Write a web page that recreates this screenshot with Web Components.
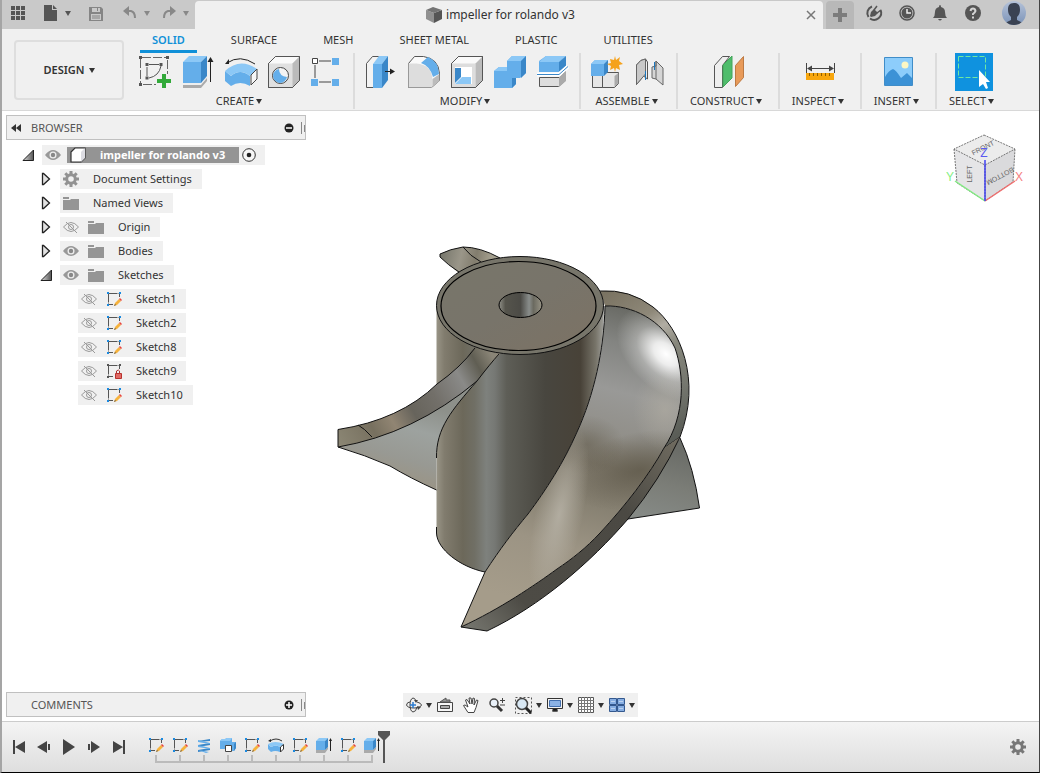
<!DOCTYPE html>
<html lang="en">
<head>
<meta charset="utf-8">
<title>impeller for rolando v3</title>
<style>
  html, body {
    height: 100%;
    margin: 0;
  }

  body {
    font: 11px/16px "Noto Sans", "Open Sans", sans-serif;
    color: #333;
    background: #fff;
    overflow: hidden;
  }
</style>
</head>
<body>
<cad-app></cad-app>

<script>
const blue = "#64aeea";
const pale = "#8cc8f6";
const deep = "#3a87c8";

const sketchBase = `
  <path d="M2.500 2.500H13.500V6M2.500 2.500V13.500H7" fill="none" stroke="#555" stroke-dasharray="9 1"/>
  <path d="M1 1h2v2H1zM13 1h2v2h-2zM1 13h2v2H1z" fill="#1b8ae0"/>`;

const icons = {
  // quick access bar
  apps: [16, 16, `<path fill="#555" d="M1 1h4v4H1zM6 1h4v4H6zM11 1h4v4h-4zM1 6h4v4H1zM6 6h4v4H6zM11 6h4v4h-4zM1 11h4v4H1zM6 11h4v4H6zM11 11h4v4h-4z"/>`],
  file: [14, 16, `<path fill="#555" d="M0 0h8v5h5v11H0z"/><path fill="#555" d="M9 0l4 4H9z"/>`],
  save: [14, 16, `<path fill="#858585" fill-rule="evenodd" d="M0 2h12l2 2v12H0zM3 3v4h8V3H9v3H8V3zM2 9v6h10V9z"/><path stroke="#858585" d="M3 11h8M3 13h8"/>`],
  undo: [14, 14, `<path fill="none" stroke="#888" stroke-width="2" d="M2 5h6q4 1 4 7"/><path fill="#888" d="M0 5l6-5v10z"/>`],
  redo: [14, 14, `<path fill="none" stroke="#888" stroke-width="2" d="M12 5H6Q2 6 2 12"/><path fill="#888" d="M14 5L8 0v10z"/>`],
  caret: [6, 5, `<path fill="currentColor" d="M0 0h6L3 5z"/>`],
  cube: [16, 16, `<path fill="#909090" d="M0 3l8 3v10l-8-4z"/><path fill="#555" d="M16 3L8 6v10l8-4z"/><path fill="#747474" d="M0 3l7-3 9 3-8 3z"/>`],
  close: [10, 10, `<path stroke="#777" stroke-width="1.500" d="M1 1l8 8M9 1L1 9"/>`],
  plus: [14, 14, `<path fill="#7c7c7c" d="M5 0h4v5h5v4H9v5H5V9H0V5h5z"/>`],
  extensions: [16, 16, `<path d="M6 1.500A7 7 0 0 0 2.500 12M14.500 5A7 7 0 0 1 4 13.500" fill="none" stroke="#555" stroke-width="2"/><path fill="#555" d="M4 11l1-4 3-3 4 4-3 3-4 1z"/><path d="M8 5l3-4M11 8l4-3" stroke="#555" stroke-width="1.500"/>`],
  clock: [16, 16, `<circle cx="8" cy="8" r="7" fill="none" stroke="#555" stroke-width="1.500"/><circle cx="8" cy="8" r="5.500" fill="#555"/><path d="M8 4v4h4" stroke="#eee" stroke-width="1.500" fill="none"/>`],
  bell: [16, 16, `<path fill="#555" d="M8 0q1 0 1 2 4 1 4 5 0 4 2 6H1q2-2 2-6 0-4 4-5 0-2 1-2M6 14h4q-2 3-4 0"/>`],
  help: [16, 16, `<circle cx="8" cy="8" r="8" fill="#555"/><path d="M5.500 6Q6 3.500 8 3.500T10.500 6Q10 7.500 8 9v1M8 11.500v2" stroke="#d4d4d4" stroke-width="2" fill="none"/>`],
  avatar: [24, 24, `<defs><clipPath id="a"><circle cx="12" cy="12" r="12"/></clipPath><linearGradient id="g" x2="0" y2="1"><stop stop-color="#b5c2d8"/><stop offset="1" stop-color="#7b93b8"/></linearGradient></defs><g clip-path="url(#a)"><path fill="url(#g)" d="M0 0h24v24H0z"/><path fill="#3a4252" d="M12 2c5 0 6 3 6 7 0 3-1 5-3 7v3l6 3v2H3v-2l6-3v-3c-2-2-3-4-3-7 0-4 1-7 6-7"/></g>`],

  // create
  sketch: [32, 32, `
    <path d="M3 1.500h24M1.500 3v24M28.500 4v14M4 28.500h13" fill="none" stroke="#666" stroke-dasharray="9 2"/>
    <path d="M10 8.500h10M8 11v9M22 10Q20 20 10 22" fill="none" stroke="#555"/>
    <path d="M0 0h3v3H0zM27 0h3v3h-3zM0 27h3v3H0zM6.500 7h3v3h-3zM20.500 7h3v3h-3zM6.500 20.500h3v3h-3z" fill="#555"/>
    <path d="M23 18h4v5h5v4h-5v5h-4v-5h-5v-4h5z" fill="#32a93a"/>`],
  extrude: [32, 32, `
    <path d="M1 28h18l6-7v4l-6 7H1z" fill="#aaa"/><path d="M1 27h18l6-7v2l-6 7H1z" fill="#eee"/>
    <path d="M1 6h18v21H1z" fill="${blue}"/><path d="M1 6l6-6h18l-6 6z" fill="${pale}"/><path d="M19 6l6-6v20l-6 7z" fill="${deep}"/>
    <path d="M28.500 26V4" stroke="#222"/><path d="M28.500 1l3 5h-6z" fill="#222"/>`],
  revolve: [32, 32, `
    <path d="M2 7Q15-2 30 8" fill="none" stroke="#222"/><path d="M0 8l4-5v5z" fill="#222"/>
    <path d="M0 15l6 5q9-8 19 0v10q-10-6-19 0l-6-5z" fill="${blue}"/><path d="M0 15Q15 1 32 13l-7 7q-10-8-19 0z" fill="${pale}"/>
    <path d="M26 19l6-6v10l-6 6z" fill="#f6f6f6" stroke="#444"/>`],
  hole: [32, 32, `
    <path d="M.500 7.500l7-7h24v24l-7 7H.500z" fill="#e0e0e0" stroke="#555"/><path d="M.500 7.500l7-7h24l-7 7z" fill="#fafafa"/>
    <path d="M24.500 7.500l7-7v24l-7 7z" fill="#bbb"/><path d="M.500 7.500l7-7h24v24l-7 7H.500z" fill="none" stroke="#555"/>
    <circle cx="12.500" cy="19.500" r="8" fill="#f4f4f4" stroke="#444"/><path d="M11 13Q11 20 19 21a7 7 0 1 1-8-8" fill="${blue}"/>`],
  pattern: [32, 32, `
    <path d="M8 5h12M8 26h12M4 9v13" stroke="#444"/><path d="M1.500 2.500h5v5h-5z" fill="#fff" stroke="#444"/>
    <path d="M21 2h7v7h-7zM0 23h7v7H0zM21 23h7v7h-7z" fill="${blue}"/>`],

  // modify
  press: [32, 32, `
    <path d="M1.500 31.500v-24l6-7h6v31z" fill="#f3f3f3" stroke="#555"/><path d="M8 8h9v24H8z" fill="${blue}"/>
    <path d="M8 8l6-8h9l-6 8z" fill="${pale}"/><path d="M17 8l6-8v24l-6 8z" fill="${deep}"/>
    <path d="M20 15.500h7" stroke="#222"/><path d="M30 15.500l-5-3v6z" fill="#222"/>`],
  fillet: [32, 32, `
    <path d="M.500 7.500l6-7h9q15 2 16 17v7l-8 7H.500z" fill="#fafafa" stroke="#555"/>
    <path d="M.500 7.500h8q15 1 16 16v8H.500z" fill="#ddd"/><path d="M13 7l7-6q11 5 11 17l-6 3Q22 10 13 7" fill="${blue}"/>
    <path d="M24.500 23l7-5v7l-7 6z" fill="#bbb"/>`],
  shell: [32, 32, `
    <path d="M.500 7.500l7-7h24v24l-7 7H.500z" fill="#fafafa" stroke="#555"/><path d="M.500 7.500h24v24H.500z" fill="#ddd"/>
    <path d="M24.500 7.500l7-7v24l-7 7z" fill="#bbb"/><path d="M.500 7.500l7-7h24v24l-7 7H.500z" fill="none" stroke="#555"/>
    <path d="M4 11h17v17H4z" fill="#fff"/><path d="M4 12h6v9l-6 6z" fill="${deep}"/><path d="M4 28l7-7h9v7z" fill="${pale}"/>`],
  combine: [32, 32, `
    <path d="M0 15l5-4h8V5l5-5h14v17l-6 5h-4v6l-4 4H0z" fill="${blue}"/><path d="M0 15l5-4h8v4zM13 5l5-5h14l-5 5z" fill="${pale}"/>
    <path d="M27 5l5-5v17l-5 5zM18 32V22h4v6z" fill="${deep}"/>`],
  split: [32, 32, `
    <path d="M2 5l7-5h20l-7 6v10H2z" fill="${blue}"/><path d="M2 6l7-6h20l-7 6z" fill="${pale}"/><path d="M22 6l7-6v10l-7 6z" fill="${deep}"/>
    <path d="M2.500 21.500h20l6-6v9l-7 6h-19z" fill="#ddd" stroke="#555"/><path d="M22 21l7-6v10l-7 6z" fill="#aaa"/>
    <path d="M0 18.500h22l9-8" stroke="#fff" stroke-width="4" fill="none"/><path d="M0 18.500h22l9-8" stroke="${deep}" fill="none"/>`],

  // assemble
  component: [32, 32, `
    <path d="M1.500 19.500h10v12h-10zM11.500 19.500l4-3h12v11l-4 4h-12z" fill="#e6e6e6" stroke="#555"/>
    <path d="M0 8l4-4h13l-4 4v12H0z" fill="${blue}"/><path d="M0 8l4-4h13l-4 4z" fill="${pale}"/><path d="M13 8l4-4v12l-4 4z" fill="${deep}"/>
    <path d="M23.500 20v11l4-4V17z" fill="#aaa"/>
    <path d="M24 0l1 4 4-3-1 4 4 3-4 1 1 5-4-2-1 4-1-4-4 2 1-4-4-2 4-1-1-4 4 1z" fill="#f5a21c"/>`],
  joint: [32, 32, `
    <path d="M2.500 28.500V9q4-6 9-6l2 3v17l-4-3z" fill="#eee" stroke="#555"/><path d="M2.500 28.500V9q4-6 9-6v15z" fill="#c8c8c8" stroke="#666"/>
    <path d="M18 11l4-1V5l7 7v17l-7-6-4-1z" fill="#d5d5d5" stroke="#666"/><path d="M22 5v18" stroke="#666"/>
    <path d="M11.500 15v9M20.500 6v8" stroke="#1b77bd"/>`],

  // construct, inspect, insert, select
  plane: [32, 32, `
    <path d="M2.500 31.500v-22l8-9h7l-7 9v22z" fill="#eee" stroke="#555"/><path d="M11 9l9-9v22l-9 9z" fill="#4fbd6c" stroke="#44a45b"/>
    <path d="M23.500 9.500l8-9v21l-8 9z" fill="#e89a59" stroke="#bd7a44"/>`],
  measure: [32, 32, `
    <path d="M2.500 7v10M30.500 7v10M5 12.500h23" stroke="#444"/><path d="M3 12.500l5-3v6zM30 12.500l-5-3v6z" fill="#444"/>
    <path d="M2 17h28v7H2z" fill="#f8a70f"/><path d="M5.500 17v3M9.500 17v3M13.500 17v3M17.500 17v3M21.500 17v3M25.500 17v3" stroke="#8d5d00"/>`],
  image: [32, 32, `
    <path d="M2.500 1.500h28v28h-28z" fill="#8dcdfb" stroke="#408dc8"/><circle cx="23" cy="9" r="3.500" fill="#fdf7c4"/>
    <path d="M3 21Q7 14 11 13q3 1 8 9l6-5 5 5v7H3z" fill="#3c92d6"/>`],
  select: [38, 38, `
    <path d="M0 0h38v38H0z" fill="#0f92df"/><path d="M3.500 3.500h27v21h-27z" fill="none" stroke="#6fe8a0" stroke-dasharray="5 2"/>
    <path d="M24 17v17l4-3 3 5 2-1-2-6h4z" fill="#fff"/>`],

  // browser tree
  rewind: [10, 8, `<path fill="#333" d="M5 0v8L0 4zM10 0v8L5 4z"/>`],
  minus: [10, 10, `<circle cx="5" cy="5" r="4.500" fill="#222"/><path d="M2 5h6" stroke="#fff" stroke-width="1.500"/>`],
  add: [10, 10, `<circle cx="5" cy="5" r="4.500" fill="#222"/><path d="M2 5h6M5 2v6" stroke="#fff" stroke-width="1.500"/>`],
  grip: [4, 12, `<path d="M.500 0v12M3.500 3v7" stroke="#888"/>`],
  open: [12, 12, `<defs><linearGradient id="g"><stop stop-color="#ddd"/><stop offset="1" stop-color="#555"/></linearGradient></defs><path d="M1 11.500L11.500 1v10.500z" fill="url(#g)" stroke="#222"/>`],
  shut: [12, 14, `<path d="M2.500 1.500h1l6 5.500-6 5.500h-1z" fill="#e2e2e2" stroke="#222" stroke-width="1.300"/>`],
  eye: [16, 16, `<path fill="#989898" d="M0 8q8-10 16 0-8 10-16 0"/><circle cx="8" cy="8" r="3.500" fill="#eee"/><circle cx="8" cy="8" r="2.200" fill="#888"/>`],
  hidden: [16, 16, `<path fill="none" stroke="#999" d="M.500 8Q8-1 15.500 8 8 17 .500 8M3 3l11 11"/><circle cx="8" cy="8" r="2.500" fill="none" stroke="#999"/>`],
  gear: [16, 16, `<circle cx="8" cy="8" r="4.300" fill="none" stroke="currentColor" stroke-width="3"/><path stroke="currentColor" stroke-width="3" d="M8 0v3M8 13v3M0 8h3M13 8h3M2.300 2.300l2.200 2.200M11.500 11.500l2.200 2.200M2.300 13.700l2.200-2.200M11.500 4.500l2.200-2.200"/>`],
  folder: [16, 16, `<path fill="#959595" d="M0 5h7l1-1h8v11H0z"/><path fill="#959595" d="M0 2h6v2H0z"/>`],
  body: [16, 16, `<path d="M1 5l4-4h10v10l-4 4H1z" fill="#fff" stroke="#333" stroke-width="1.200"/><path d="M11 5l4-4v10l-4 4z" fill="#dcdce2"/>`],
  radio: [16, 16, `<circle cx="8" cy="8" r="6.300" fill="#f6f6f6" stroke="#333"/><circle cx="8" cy="8" r="2.300" fill="#222"/>`],
  pencil: [16, 16, `${sketchBase}<path d="M8 15l1-3 4-4 2 2-4 4z" fill="#f6b23c"/><path d="M8 15l1-2 1 1z" fill="#555"/><path d="M13 8l1-1 2 2-1 1z" fill="#e8413c"/>`],
  locked: [16, 16, `<path d="M2.500 2.500H13.500V6M2.500 2.500V13.500H7" fill="none" stroke="#555" stroke-dasharray="9 1"/><path d="M1 1h2v2H1zM13 1h2v2h-2zM1 13h2v2H1z" fill="#555"/><path d="M10.500 10V8q2-2 3 0v2" fill="none" stroke="#a33"/><path d="M9.500 10.500h6v5h-6z" fill="#e06a66" stroke="#b8322e"/>`],

  // timeline
  coil: [16, 16, `<path d="M2 4l12-2v2L2 5zM2 8l12-2v2L2 10zM2 13l12-2v2L2 15z" fill="${deep}"/><path d="M2 3l12 3v1L2 5zM2 8l12 3v1L2 10zM2 13l11 2-3 1z" fill="${blue}"/>`],
  join: [16, 16, `<path d="M0 4l2-2h3l2-1h5v4h4v6l-2 3H5v-2H0z" fill="${blue}"/><path d="M0 4l2-2h3l2-1h5l-2 3z" fill="${pale}"/><path d="M14 7l2-2v6l-2 3z" fill="${deep}"/><path d="M5.500 8.500h6v6h-6z" fill="#fff" stroke="#444"/>`],
  sweep: [16, 16, `<path d="M2 4q6-4 12 0" fill="none" stroke="#333"/><path d="M0 4l3-2v3z" fill="#222"/><path d="M0 7l3 3q5-3 9 0v5q-5-2-9 0l-3-3z" fill="${blue}"/><path d="M0 7q7-4 16 0l-4 3q-4-3-9 0z" fill="${pale}"/><path d="M12.500 10l3-2.500v4.500l-3 3z" fill="#fff" stroke="#333"/>`],
  pull: [16, 16, `<path d="M0 13h9l3-3v2l-3 4H0z" fill="#aaa"/><path d="M0 4h9v9H0z" fill="${blue}"/><path d="M0 4l3-3h9L9 4z" fill="${pale}"/><path d="M9 4l3-3v9l-3 3z" fill="${deep}"/><path d="M14.500 14V3" stroke="#222"/><path d="M14.500 1l1.500 3h-3z" fill="#222"/>`],
  first: [14, 14, `<path fill="#444" d="M1 0h2v14H1zM13 1v12L3 7z"/>`],
  back: [14, 14, `<path fill="#444" d="M10 1v12L0 7zM11 4h2v6h-2z"/>`],
  play: [14, 16, `<path fill="#444" d="M1 0l12 8-12 8z"/>`],
  next: [14, 14, `<path fill="#444" d="M4 1v12l9-6zM1 4h2v6H1z"/>`],
  last: [14, 14, `<path fill="#444" d="M11 0h2v14h-2zM1 1v12l10-6z"/>`],
  marker: [12, 32, `<path fill="#555" d="M0 0h12v4L7 9v23H5V9L0 4z"/>`],

  // navigation bar
  orbit: [16, 16, `<path d="M11 5q4 1 4.500 3-1 3-7.500 3T.500 8Q1 5 4 5" fill="none" stroke="#444"/><path d="M11 10q-1 5-4 5-3-1-3-7t3-7q2 0 3 3" fill="none" stroke="#444"/><path d="M7 5v6M4 8h6" stroke="#2a7bd0" stroke-width="1.500"/><path d="M8 3h4l-2 3zM11 9l4 1-3 3z" fill="#444"/>`],
  look: [16, 16, `<path d="M.500 5.500h15v9H.500z" fill="#f6f6f6" stroke="#444"/><path d="M3 5l6-4v2h4v2z" fill="#999" stroke="#555"/><path d="M3.500 8.500h9v3h-9z" fill="#aaa" stroke="#444"/>`],
  pan: [16, 16, `<path d="M4 14L.500 8.500 2 8l3 2-2.500-7 1.500-.500L7 7 6 1h2l1 6 1-6 1.500.500L11 8l2.500-5 1.500.500-2 7-2 5H5z" fill="#fff" stroke="#444"/>`],
  zoom: [16, 16, `<circle cx="5" cy="6" r="4" fill="#eaf2fa" stroke="#444" stroke-width="1.500"/><path d="M8 9l5 5" stroke="#333" stroke-width="3"/><path d="M11 3.500h5M13.500 1v5M11 8h5" stroke="#444"/>`],
  fit: [17, 17, `<path d="M.500.500h16v16H.500z" fill="none" stroke="#555" stroke-dasharray="2 2"/><circle cx="7" cy="7" r="5.500" fill="#d9e8f4" stroke="#444" stroke-width="1.500"/><path d="M11 11l5 5" stroke="#222" stroke-width="3"/>`],
  display: [16, 16, `<path d="M.500 1.500h15v10H.500z" fill="#f2f2f2" stroke="#333"/><path d="M2.500 3.500h11v6h-11z" fill="#8bb2e5" stroke="#426fae"/><path d="M5 14h6M6 12h4v2H6z" stroke="#333"/>`],
  grid: [16, 16, `<path d="M.500.500h15v15H.500z" fill="#fff" stroke="#555"/><path d="M3.500 0v16M6.500 0v16M9.500 0v16M12.500 0v16M0 3.500h16M0 6.500h16M0 9.500h16M0 12.500h16" stroke="#777"/>`],
  views: [16, 14, `<path d="M.500.500h7v6h-7zM8.500.500h7v6h-7zM.500 7.500h7v6h-7zM8.500 7.500h7v6h-7z" fill="#87aee2" stroke="#34598f"/><path d="M2 3.500h4M10 3.500h4M2 10.500h4M10 10.500h4" stroke="#bcd3f0"/>`]
};

class CadIcon extends HTMLElement {
  connectedCallback() {
    const [w, h, art] = icons[this.getAttribute("name")];
    this.attachShadow({ mode: "open" }).innerHTML = `
      <style>
        :host { display: inline-flex; flex: none; }
        svg { display: block; overflow: visible; }
      </style>
      <svg width="${w}" height="${h}" viewBox="0 0 ${w} ${h}" aria-hidden="true">${art}</svg>`;
  }
}

const icon = name => `<cad-icon name="${name}"></cad-icon>`;

const buttonReset = `
  button {
    font: inherit;
    color: inherit;
    background: none;
    border: 0;
    padding: 0;
    margin: 0;
    display: inline-flex;
    align-items: center;
    justify-content: center;
  }
`;

function define(name, html) {
  const template = document.createElement("template");
  template.innerHTML = html;
  customElements.define(name, class extends HTMLElement {
    constructor() {
      super();
      this.attachShadow({ mode: "open" }).appendChild(template.content.cloneNode(true));
    }
  });
}

customElements.define("cad-icon", CadIcon);

define("app-bar", `
  <style>
    :host {
      display: flex;
      height: 28px;
      padding-top: 1px;
      background: #c9c9c9;
    }
    ${buttonReset}
    .quick {
      display: flex;
      align-items: center;
      width: 185px;
      padding-left: 8px;
      padding-bottom: 4px;
      color: #555;
    }
    .quick button { gap: 7px; }
    .quick .file { margin-left: 18px; }
    .quick .save { margin-left: 18px; }
    .quick .undo { margin-left: 20px; color: #888; }
    .quick .redo { margin-left: 12px; color: #888; }
    .tab {
      flex: 1;
      display: flex;
      align-items: center;
      padding-right: 7px;
      background: #f0f0f0;
      border-radius: 4px 4px 0 0;
    }
    .tab span {
      flex: 1;
      display: flex;
      justify-content: center;
      align-items: center;
      gap: 4px;
      font-size: 12px;
    }
    .new {
      width: 28px;
      margin-left: 3px;
      background: #b8b8b8;
      border-radius: 4px 4px 0 0;
    }
    .tools {
      display: flex;
      align-items: center;
      gap: 17px;
      padding: 0 13px 4px 12px;
    }
    .tools .user { margin-left: 4px; }
  </style>
  <div class="quick">
    <button aria-label="Data panel">${icon("apps")}</button>
    <button class="file" aria-label="File">${icon("file")}${icon("caret")}</button>
    <button class="save" aria-label="Save">${icon("save")}</button>
    <button class="undo" aria-label="Undo">${icon("undo")}${icon("caret")}</button>
    <button class="redo" aria-label="Redo">${icon("redo")}${icon("caret")}</button>
  </div>
  <div class="tab">
    <span>${icon("cube")}<slot></slot></span>
    <button aria-label="Close">${icon("close")}</button>
  </div>
  <button class="new" aria-label="New design">${icon("plus")}</button>
  <div class="tools">
    <button aria-label="Extensions">${icon("extensions")}</button>
    <button aria-label="Job status">${icon("clock")}</button>
    <button aria-label="Notifications">${icon("bell")}</button>
    <button aria-label="Help">${icon("help")}</button>
    <button class="user" aria-label="Account">${icon("avatar")}</button>
  </div>
`);

// one labelled set of tools; the tool icons are slotted in
define("tool-group", `
  <style>
    :host {
      display: flex;
      flex-direction: column;
      align-items: center;
      padding: 0 10px;
      border-right: 2px solid #dcdcdc;
    }
    :host(:last-child) { border: 0; }
    ${buttonReset}
    .row {
      display: flex;
      align-items: center;
      gap: 11px;
      height: 38px;
    }
    .label {
      gap: 2px;
      padding: 2px 6px 0 2px;
    }
  </style>
  <div class="row"><slot></slot></div>
  <button class="label"><slot name="label"></slot>${icon("caret")}</button>
`);

const group = (label, names) => `
  <tool-group><span slot="label">${label}</span>${names.map(n => `<button aria-label="${n}">${icon(n)}</button>`).join("")}</tool-group>`;

define("tool-ribbon", `
  <style>
    :host {
      display: flex;
      background: #f0f0f0;
      border-bottom: 1px solid #d8d8d8;
      padding-bottom: 1px;
    }
    ${buttonReset}
    .design {
      flex: none;
      width: 110px;
      height: 60px;
      margin: 11px 5px 0 12px;
      border: 2px solid #dedede;
      border-radius: 4px;
      font-weight: 600;
      gap: 4px;
    }
    nav {
      display: flex;
      gap: 22px;
      padding-left: 11px;
    }
    nav a {
      padding: 3px 12px 2px;
      border-bottom: 3px solid transparent;
      color: inherit;
      text-decoration: none;
    }
    nav a.on {
      color: #1090d8;
      font-weight: 600;
      border-color: #1090d8;
    }
    .groups { display: flex; }
  </style>
  <button class="design">DESIGN ${icon("caret")}</button>
  <div>
    <nav>
      <a class="on" href="#solid">SOLID</a>
      <a href="#surface">SURFACE</a>
      <a href="#mesh">MESH</a>
      <a href="#sheet">SHEET METAL</a>
      <a href="#plastic">PLASTIC</a>
      <a href="#utilities">UTILITIES</a>
    </nav>
    <div class="groups">
      ${group("CREATE", ["sketch", "extrude", "revolve", "hole", "pattern"])}
      ${group("MODIFY", ["press", "fillet", "shell", "combine", "split"])}
      ${group("ASSEMBLE", ["component", "joint"])}
      ${group("CONSTRUCT", ["plane"])}
      ${group("INSPECT", ["measure"])}
      ${group("INSERT", ["image"])}
      ${group("SELECT", ["select"])}
    </div>
  </div>
`);

define("dock-panel", `
  <style>
    :host { display: block; }
    ${buttonReset}
    header {
      display: flex;
      align-items: center;
      height: 23px;
      padding-left: 4px;
      background: #f0f0f0;
      border: 1px solid #c0c0c0;
      color: #555;
    }
    .lead { width: 10px; margin-right: 10px; }
    .title { flex: 1; }
    .grip { margin-left: 7px; }
  </style>
  <header>
    <span class="lead"><slot name="lead"></slot></span>
    <span class="title"><slot name="title"></slot></span>
    <slot name="action"></slot>
    <cad-icon class="grip" name="grip"></cad-icon>
  </header>
  <slot></slot>
`);

class TreeRow extends HTMLElement {
  connectedCallback() {
    const level = Number(this.getAttribute("level"));
    const arrow = this.getAttribute("arrow");
    const eye = this.getAttribute("eye");
    const root = this.hasAttribute("root");
    this.attachShadow({ mode: "open" }).innerHTML = `
      <style>
        :host {
          display: flex;
          align-items: center;
          height: 24px;
          padding-left: ${[16, 34, 52][level]}px;
        }
        ${buttonReset}
        .arrow { display: flex; width: 12px; margin-right: 8px; }
        .item {
          display: flex;
          align-items: center;
          height: 20px;
          padding: 0 10px 0 3px;
          background: #f0f0f0;
          color: #333;
        }
        .eye { margin-right: 9px; }
        .type { margin-right: 14px; color: #929292; }
        .name { display: flex; align-items: center; }
        .root { padding-right: 8px; }
        .root .name {
          height: 16px;
          padding: 0 14px 0 3px;
          margin-right: 2px;
          background: #949494;
          color: #fff;
          font-weight: bold;
        }
        .root .eye { margin-right: 6px; }
      </style>
      <span class="arrow">${arrow ? `<button aria-label="Toggle">${icon(arrow)}</button>` : ""}</span>
      <div class="item ${root ? "root" : ""}">
        ${eye ? `<button class="eye" aria-label="Visibility">${icon(eye)}</button>` : ""}
        <span class="name"><cad-icon class="type" name="${this.getAttribute("icon")}"></cad-icon><slot></slot></span>
        ${root ? icon("radio") : ""}
      </div>`;
  }
}
customElements.define("tree-row", TreeRow);

define("impeller-model", `
  <style>
    :host { display: block; }
    svg { display: block; width: 372px; height: 392px; }
    .edge { fill: none; stroke: #111; }
  </style>
  <svg viewBox="334 242 372 392" role="img" aria-label="Impeller">
    <defs>
      <linearGradient id="hub" gradientUnits="userSpaceOnUse" x1="436" x2="604" y1="0" y2="0">
        <stop stop-color="#9a9688"/><stop offset=".05" stop-color="#817c6e"/><stop offset=".16" stop-color="#6c685a"/>
        <stop offset=".23" stop-color="#706f65"/><stop offset=".3" stop-color="#7e817d"/><stop offset=".35" stop-color="#767874"/>
        <stop offset=".42" stop-color="#5e5e57"/><stop offset=".65" stop-color="#48463f"/><stop offset=".86" stop-color="#484238"/>
        <stop offset=".95" stop-color="#777469"/><stop offset="1" stop-color="#a0a09b"/>
      </linearGradient>
      <linearGradient id="cap" x2="1" y2="1"><stop stop-color="#78766a"/><stop offset=".5" stop-color="#78746a"/><stop offset="1" stop-color="#7c7264"/></linearGradient>
      <linearGradient id="bore"><stop stop-color="#8f8f87"/><stop offset=".15" stop-color="#55544c"/><stop offset=".5" stop-color="#4c4b46"/><stop offset=".7" stop-color="#898d8b"/><stop offset=".8" stop-color="#6b6a60"/><stop offset="1" stop-color="#989486"/></linearGradient>
      <linearGradient id="blade" gradientUnits="userSpaceOnUse" x1="640" y1="306" x2="560" y2="610">
        <stop stop-color="#656660"/><stop offset=".13" stop-color="#838481"/><stop offset=".28" stop-color="#999997"/>
        <stop offset=".42" stop-color="#918f89"/><stop offset=".52" stop-color="#7f796c"/><stop offset=".65" stop-color="#878172"/>
        <stop offset=".8" stop-color="#9c9484"/><stop offset="1" stop-color="#a59c8a"/>
      </linearGradient>
      <radialGradient id="shine"><stop stop-color="#fff"/><stop offset=".25" stop-color="#fff" stop-opacity=".85"/><stop offset=".6" stop-color="#fff" stop-opacity=".3"/><stop offset="1" stop-color="#fff" stop-opacity="0"/></radialGradient>
      <radialGradient id="shade"><stop stop-color="#5f594a" stop-opacity=".8"/><stop offset="1" stop-color="#5f594a" stop-opacity="0"/></radialGradient>
      <radialGradient id="glow"><stop stop-color="#b5b0a4" stop-opacity=".9"/><stop offset="1" stop-color="#b5b0a4" stop-opacity="0"/></radialGradient>
      <linearGradient id="rim" gradientUnits="userSpaceOnUse" x1="603" y1="295" x2="685" y2="430">
        <stop stop-color="#7a7362"/><stop offset=".25" stop-color="#8e8879"/><stop offset=".36" stop-color="#b1ada3"/><stop offset=".5" stop-color="#87877c"/><stop offset=".75" stop-color="#75776f"/><stop offset="1" stop-color="#5a5d57"/>
      </linearGradient>
      <linearGradient id="skirt" gradientUnits="userSpaceOnUse" x1="675" y1="445" x2="475" y2="630">
        <stop stop-color="#6d695e"/><stop offset=".3" stop-color="#4b4943"/><stop offset=".8" stop-color="#4d4b45"/><stop offset="1" stop-color="#72726b"/>
      </linearGradient>
      <linearGradient id="tail" gradientUnits="userSpaceOnUse" x1="675" y1="450" x2="655" y2="518"><stop stop-color="#6b6d68"/><stop offset=".5" stop-color="#7b7d77"/><stop offset="1" stop-color="#858985"/></linearGradient>
      <linearGradient id="band" gradientUnits="userSpaceOnUse" x1="338" y1="438" x2="490" y2="352">
        <stop stop-color="#8a8573"/><stop offset=".2" stop-color="#77705f"/><stop offset=".32" stop-color="#918573"/><stop offset=".45" stop-color="#67645c"/><stop offset=".6" stop-color="#726f69"/><stop offset=".78" stop-color="#8a8a88"/><stop offset=".9" stop-color="#605e53"/><stop offset="1" stop-color="#8a8577"/>
      </linearGradient>
      <linearGradient id="under" gradientUnits="userSpaceOnUse" x1="400" y1="490" x2="425" y2="405"><stop stop-color="#9b9280"/><stop offset=".35" stop-color="#989993"/><stop offset=".7" stop-color="#9da29f"/><stop offset="1" stop-color="#8d908a"/></linearGradient>
      <linearGradient id="fin" gradientUnits="userSpaceOnUse" x1="442" y1="250" x2="490" y2="262"><stop stop-color="#77776c"/><stop offset=".4" stop-color="#9a9689"/><stop offset=".7" stop-color="#827d6e"/><stop offset="1" stop-color="#a49f8e"/></linearGradient>
      <clipPath id="face"><path d="M605 306C632 305 662 320 675 348C684 374 686 415 664 448C650 474 625 506 600 533C586 548 572 559 557 569C535 585 500 609 461 627L485 572C500 549 513 532 528 514C546 490 564 462 577 432C594 395 604 350 605 306"/></clipPath>
    </defs>

    <path d="M440 254Q450 249 463 247Q480 247 502 259L460 274Q450 266 440 257z" fill="url(#fin)"/>
    <path class="edge" d="M459 272Q448 265 440 257V254Q450 249 463 247Q480 247 500 258M463 247Q470 256 481 262"/>

    <path d="M436.500 305V533C437 549 460 567 485 572C500 549 513 532 528 514C546 490 564 462 577 432C594 395 604 350 604 305z" fill="url(#hub)"/>
    <path class="edge" d="M436.500 527V533C437 549 460 567 485 572"/>

    <path d="M680 438Q694 468 699.500 508L628 519z" fill="url(#tail)"/>
    <path class="edge" d="M680 438Q694 468 699.500 508L628 519"/>

    <path d="M600 291Q630 289 653 307C680 328 702 380 680 437L664 448C686 415 684 374 675 348C662 320 632 305 605 306z" fill="url(#rim)"/>
    <path class="edge" d="M600 291Q630 289 653 307C680 328 702 380 680 437L664 448"/>

    <path d="M680 437Q660 480 628 519C590 563 540 606 487 631L461 627C500 609 535 585 557 569C572 559 586 548 600 533C625 506 650 474 664 448z" fill="url(#skirt)"/>
    <path class="edge" d="M680 437Q660 480 628 519C590 563 540 606 487 631L461 627"/>

    <g clip-path="url(#face)">
      <path d="M455 300h240v335H455z" fill="url(#blade)"/>
      <ellipse cx="640" cy="470" rx="75" ry="38" fill="url(#shade)" transform="rotate(-12 640 470)"/>
      <ellipse cx="586" cy="445" rx="38" ry="30" fill="url(#shade)" opacity=".6"/>
      <ellipse cx="559" cy="515" rx="24" ry="90" fill="url(#glow)" transform="rotate(12 559 515)"/>
      <ellipse cx="666" cy="354" rx="58" ry="36" fill="url(#shine)" transform="rotate(42 666 354)"/>
      <ellipse cx="665" cy="410" rx="32" ry="40" fill="url(#glow)" opacity=".6"/>
    </g>
    <path class="edge" d="M605 306C632 305 662 320 675 348C684 374 686 415 664 448C650 474 625 506 600 533C586 548 572 559 557 569C535 585 500 609 461 627L485 572C500 549 513 532 528 514C546 490 564 462 577 432C594 395 604 350 605 306"/>

    <path d="M338 447Q405 434 477 381C452 410 436 428 436.500 458V490Q410 478 390 466Q365 455 338 447" fill="url(#under)"/>
    <path class="edge" d="M436.500 490Q410 478 390 466Q365 455 338 447M477 381C452 410 436 428 436.500 458"/>
    <path d="M338 429.500Q400 420 437 384Q460 368 475 346L502 352Q492 362 477 381Q414 434 338 447z" fill="url(#band)"/>
    <path class="edge" d="M338 447V429.500Q400 420 437 384Q460 368 475 348M499 354Q490 364 477 381Q414 434 338 447M358 425Q364 428 372 437"/>

    <ellipse cx="520" cy="305.500" rx="83.500" ry="49" fill="#77756a" stroke="#111"/>
    <ellipse cx="518.500" cy="306" rx="77.500" ry="44.500" fill="url(#cap)" stroke="#000" stroke-width="1.200"/>
    <ellipse cx="520.500" cy="305" rx="21.500" ry="12.500" fill="url(#bore)" stroke="#000"/>
  </svg>
`);

define("view-cube", `
  <style>
    :host { display: block; }
    svg { display: block; width: 80px; height: 72px; }
    text { font: 7px "Liberation Sans", sans-serif; fill: #666; text-anchor: middle; }
    .axis { font-size: 12px; }
    .y { fill: #84f084; }
    .z { fill: #5a5af0; }
    .x { fill: #f58080; }
  </style>
  <svg viewBox="944 132 80 72" role="img" aria-label="View cube">
    <path d="M984 135l31 14-30 16-31-16z" fill="#ececec"/>
    <path d="M954 149l31 16v36l-28-18z" fill="#e5e5e7"/>
    <path d="M1015 149l-30 16v36l28-19z" fill="#dadadc"/>
    <path d="M984 135l31 14-30 16-31-16zM954 149l3 34 28 18 28-19 2-33M985 165v36" fill="none" stroke="#555" stroke-width=".8" stroke-dasharray="2 1"/>
    <text transform="translate(984 150) rotate(-27)">FRONT</text>
    <text transform="translate(972 174) rotate(-90)">LEFT</text>
    <text transform="translate(999 174) rotate(152)">BOTTOM</text>
    <path d="M985 201l-30-20" stroke="#84ec84" stroke-width="1.500"/>
    <path d="M985 201l30-20" stroke="#f07070" stroke-width="1.500"/>
    <path d="M985 201v-41" stroke="#4040f0" stroke-width="1.500"/>
    <text class="axis y" x="950" y="181">Y</text>
    <text class="axis z" x="984" y="157">Z</text>
    <text class="axis x" x="1019" y="181">X</text>
  </svg>
`);

define("nav-bar", `
  <style>
    :host {
      display: flex;
      align-items: center;
      height: 24px;
      padding: 0 3px;
      background: #f0f0f0;
      color: #333;
    }
    ${buttonReset}
    button { margin-right: 10px; }
    button.menu { margin-right: 5px; gap: 4px; }
    button:last-child { margin-right: 0; }
  </style>
  <button class="menu" aria-label="Orbit">${icon("orbit")}${icon("caret")}</button>
  <button aria-label="Look at">${icon("look")}</button>
  <button aria-label="Pan">${icon("pan")}</button>
  <button aria-label="Zoom">${icon("zoom")}</button>
  <button class="menu" aria-label="Fit">${icon("fit")}${icon("caret")}</button>
  <button class="menu" aria-label="Display settings">${icon("display")}${icon("caret")}</button>
  <button class="menu" aria-label="Grid and snaps">${icon("grid")}${icon("caret")}</button>
  <button class="menu" aria-label="Viewports">${icon("views")}${icon("caret")}</button>
`);

const features = ["pencil", "pencil", "coil", "join", "pencil", "sweep", "pencil", "pull", "pencil", "pull"];

define("time-line", `
  <style>
    :host {
      display: flex;
      align-items: center;
      height: 50px;
      padding: 0 13px 0 10px;
      border-top: 1px solid #ccc;
      background: linear-gradient(#f4f4f4, #dedede);
      color: #777;
    }
    ${buttonReset}
    .play { display: flex; gap: 11px; margin-right: 18px; }
    ol {
      display: flex;
      align-self: flex-start;
      margin: 0;
      padding: 15px 0 0;
      list-style: none;
    }
    li {
      width: 24px;
      display: flex;
      flex-direction: column;
      align-items: center;
    }
    /* each step hangs its tick on the shared rail */
    li::after {
      content: "";
      width: 24px;
      height: 8px;
      margin-top: 2px;
      background:
        linear-gradient(#bbb, #bbb) center / 2px 100% no-repeat,
        linear-gradient(#bbb, #bbb) bottom / 100% 2px no-repeat;
    }
    li:first-child::after {
      background:
        linear-gradient(#bbb, #bbb) center / 2px 100% no-repeat,
        linear-gradient(#bbb, #bbb) right bottom / 13px 2px no-repeat;
    }
    li:last-child::after {
      background:
        linear-gradient(#bbb, #bbb) center / 2px 100% no-repeat,
        linear-gradient(#bbb, #bbb) left bottom / 13px 2px no-repeat;
    }
    .marker { margin-left: -6px; }
    .settings { margin-left: auto; }
  </style>
  <div class="play">
    <button aria-label="Go to start">${icon("first")}</button>
    <button aria-label="Step back">${icon("back")}</button>
    <button aria-label="Play">${icon("play")}</button>
    <button aria-label="Step forward">${icon("next")}</button>
    <button aria-label="Go to end">${icon("last")}</button>
  </div>
  <ol>${features.map(f => `<li><button aria-label="${f}">${icon(f)}</button></li>`).join("")}</ol>
  <cad-icon class="marker" name="marker"></cad-icon>
  <button class="settings" aria-label="Timeline settings">${icon("gear")}</button>
`);

const sketches = [["Sketch1", "pencil"], ["Sketch2", "pencil"], ["Sketch8", "pencil"], ["Sketch9", "locked"], ["Sketch10", "pencil"]];

define("cad-app", `
  <style>
    :host {
      display: flex;
      flex-direction: column;
      height: 100vh;
      box-sizing: border-box;
      border: solid #a5a5a5;
      border-width: 0 1px 1px 2px;
      border-right-color: #444;
      border-bottom-color: #000;
    }
    main {
      flex: 1;
      min-height: 0;
      display: grid;
      padding: 4px 5px 4px 4px;
      background: #fff;
    }
    /* everything in the viewport shares one cell and floats to its own edge */
    main > * { grid-area: 1 / 1; }
    dock-panel { width: 300px; align-self: start; }
    .comments { align-self: end; }
    .tree { padding-top: 3px; }
    impeller-model { place-self: center; padding-top: 43px; }
    view-cube { place-self: start end; padding: 17px 10px 0 0; }
    nav-bar { place-self: end center; }
    ${buttonReset}
  </style>
  <app-bar>impeller for rolando v3</app-bar>
  <tool-ribbon></tool-ribbon>
  <main>
    <impeller-model></impeller-model>
    <view-cube></view-cube>
    <dock-panel>
      <button slot="lead" aria-label="Collapse">${icon("rewind")}</button>
      <span slot="title">BROWSER</span>
      <button slot="action" aria-label="Hide">${icon("minus")}</button>
      <div class="tree">
        <tree-row level="0" arrow="open" eye="eye" icon="body" root>impeller for rolando v3</tree-row>
        <tree-row level="1" arrow="shut" icon="gear">Document Settings</tree-row>
        <tree-row level="1" arrow="shut" icon="folder">Named Views</tree-row>
        <tree-row level="1" arrow="shut" eye="hidden" icon="folder">Origin</tree-row>
        <tree-row level="1" arrow="shut" eye="eye" icon="folder">Bodies</tree-row>
        <tree-row level="1" arrow="open" eye="eye" icon="folder">Sketches</tree-row>
        ${sketches.map(([name, type]) => `<tree-row level="2" eye="hidden" icon="${type}">${name}</tree-row>`).join("")}
      </div>
    </dock-panel>
    <dock-panel class="comments">
      <span slot="title">COMMENTS</span>
      <button slot="action" aria-label="Expand">${icon("add")}</button>
    </dock-panel>
    <nav-bar></nav-bar>
  </main>
  <time-line></time-line>
`);
</script>
</body>
</html>
